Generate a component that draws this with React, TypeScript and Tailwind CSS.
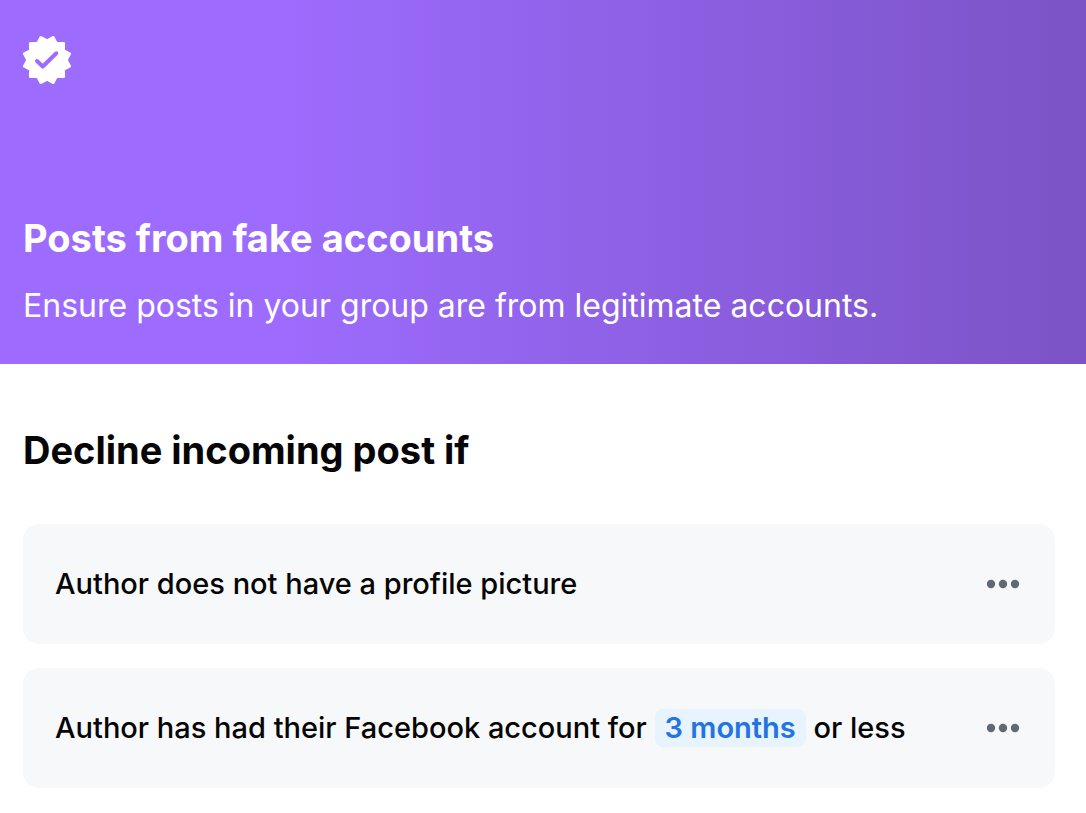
import React from 'react';

interface Rule {
  id: string;
  before: string;
  value?: string;
  after?: string;
}

const rules: Rule[] = [
  { id: 'no-picture', before: 'Author does not have a profile picture' },
  { id: 'account-age', before: 'Author has had their Facebook account for', value: '3 months', after: 'or less' },
];

const VerifiedBadge: React.FC = () => (
  <svg className="size-12" viewBox="-24 -24 48 48" aria-hidden="true">
    <path
      d="M22.500 6.100 16.400 9.400 16.600 16.600 9.400 16.400 6.100 22.500 0 19.200-6.100 22.500-9.400 16.400-16.600 16.600-16.400 9.400-22.500 6.100-19.200 0-22.500-6.100-16.400-9.400-16.600-16.600-9.400-16.400-6.100-22.500 0-19.200 6.100-22.500 9.400-16.400 16.600-16.600 16.400-9.400 22.500-6.100 19.200 0Z"
      fill="white"
      stroke="white"
      strokeWidth="3"
      strokeLinejoin="round"
    />
    <path
      d="M-10 1-4.200 6.500 9.300-6.700"
      fill="none"
      stroke="#9d6cff"
      strokeWidth="4"
      strokeLinecap="round"
      strokeLinejoin="round"
    />
  </svg>
);

const MoreIcon: React.FC = () => (
  <svg className="h-8 w-9" viewBox="0 0 36 32" fill="currentColor" aria-hidden="true">
    <circle cx="6" cy="16" r="4.200" />
    <circle cx="18" cy="16" r="4.200" />
    <circle cx="30" cy="16" r="4.200" />
  </svg>
);

const RuleRow: React.FC<{ rule: Rule }> = ({ rule }) => (
  <li className="flex min-h-[120px] items-center justify-between gap-6 rounded-2xl bg-[#f7f8f9] pr-[34px] pl-8">
    <p className="text-[29px] leading-[38px] font-medium">
      {rule.before}
      {rule.value && (
        <>
          {' '}
          <button type="button" className="rounded-lg bg-[#e7f3ff] px-[10px] font-semibold text-[#2374e1]">
            {rule.value}
          </button>{' '}
          {rule.after}
        </>
      )}
    </p>
    <button type="button" aria-label="More options" className="shrink-0 text-[#606a72]">
      <MoreIcon />
    </button>
  </li>
);

const App: React.FC = () => {
  return (
    <div className="min-h-screen bg-white font-['Inter',sans-serif] text-[#050505]">
      <header className="bg-linear-to-r from-[#9d6cff] from-25% to-[#7c53c6] pt-9 pr-8 pb-9 pl-[23px] text-white">
        <VerifiedBadge />
        <h1 className="mt-[130px] text-[38px] leading-[48px] font-bold">Posts from fake accounts</h1>
        <p className="mt-[22px] text-[32px] leading-[44px]">
          Ensure posts in your group are from legitimate accounts.
        </p>
      </header>

      <main className="pt-[62px] pr-[31px] pb-6 pl-[23px]">
        <h2 className="text-[38px] leading-[48px] font-bold">Decline incoming post if</h2>
        <ul className="mt-[50px] flex flex-col gap-6">
          {rules.map(rule => (
            <RuleRow key={rule.id} rule={rule} />
          ))}
        </ul>
      </main>
    </div>
  );
};

export default App;
